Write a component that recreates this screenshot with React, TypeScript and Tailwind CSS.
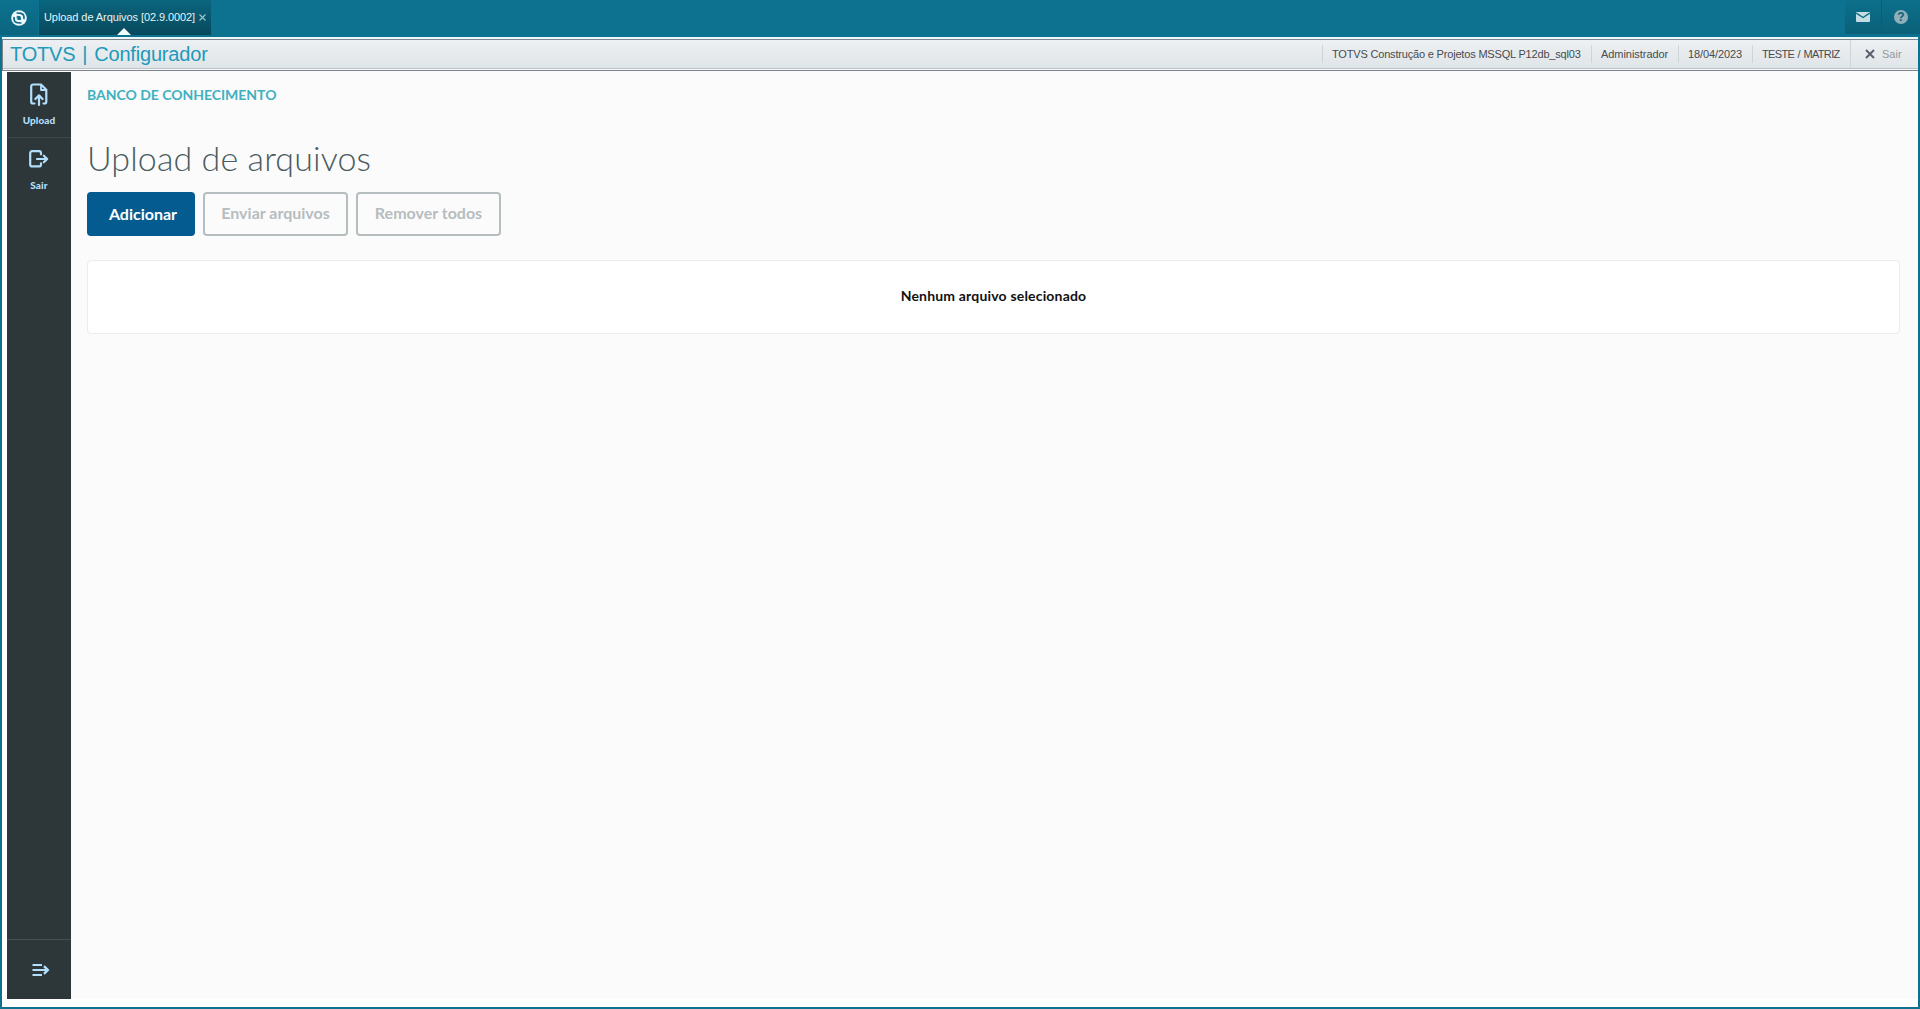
import type { ReactNode } from "react";

function UploadIcon() {
  return (
    <svg width="18" height="24" viewBox="0 0 18 24" fill="none" stroke="#b3dffc" strokeWidth="2.2" strokeLinecap="round" strokeLinejoin="round">
      <path d="M4.5 20.5H3a1.8 1.8 0 0 1-1.8-1.8V3.3A1.8 1.8 0 0 1 3 1.5h8l5.3 5.2v12a1.8 1.8 0 0 1-1.8 1.8h-1" />
      <path d="M11 1.8v5.2h5.2" strokeWidth="1.8" />
      <path d="M9 22V13M5.4 16 9 12.4l3.6 3.6" />
    </svg>
  );
}

function ExitIcon() {
  return (
    <svg className="-mt-[2px]" width="20" height="18" viewBox="0 0 20 18" fill="none" stroke="#b3dffc" strokeWidth="2.2" strokeLinecap="round" strokeLinejoin="round">
      <path d="M12 4.3V3.2A2 2 0 0 0 10 1.2H3.2a2 2 0 0 0-2 2v11.200a2 2 0 0 0 2 2H10a2 2 0 0 0 2-2v-1" />
      <path d="M8 9H18M14.8 5.7 18.2 9l-3.4 3.3" />
    </svg>
  );
}

function ExpandIcon() {
  return (
    <svg width="18" height="14" viewBox="0 0 18 14" fill="none" stroke="#b3dffc" strokeWidth="2">
      <path d="M0.5 2H10M0.5 7H16M0.5 12H10" />
      <path d="M12 3.2 15.8 7l-3.8 3.8" strokeWidth="2.4" />
    </svg>
  );
}

function Logo() {
  return (
    <svg width="16" height="16" viewBox="0 0 16 16" fill="none" stroke="#0b6a86" strokeLinecap="round">
      <circle cx="8" cy="8" r="7.8" fill="#eefafc" stroke="none" />
      <path d="M6.200 3 9.800 3.300Q12.600 3.800 12.900 6.500L13 8.500" strokeWidth="1.7" />
      <path d="M9.800 13 6.200 12.700Q3.400 12.200 3.100 9.500L3 7.500" strokeWidth="1.7" />
      <path d="M6.300 6.300 9.200 6.600 9.700 9.700 6.800 9.400z" fill="#0b6a86" strokeWidth="0.800" strokeLinejoin="round" />
    </svg>
  );
}

function HeaderItem({ width, children }: { width: string; children: ReactNode }) {
  return <div className={`flex h-[18px] items-center border-l border-[#cfd4d6] pl-[9px] ${width}`}>{children}</div>;
}

function MenuItem({ icon, label }: { icon: ReactNode; label: string }) {
  return (
    <div className="flex h-[65px] flex-col items-center">
      <div className="flex h-[39px] items-center pt-[7px]">{icon}</div>
      <span className="mt-[2px] text-[10px] leading-[14px] font-black tracking-[0.1px] text-[#b3dffc]">{label}</span>
    </div>
  );
}

export default function App() {
  return (
    <div className="flex h-[1009px] w-[1920px] flex-col overflow-hidden bg-[#0c728f] font-['Lato',sans-serif] whitespace-nowrap">
      <div className="flex h-[37px] shrink-0 items-start">
        <div className="flex h-[35px] w-[38px] items-center justify-center bg-linear-to-b from-[#0c728f] to-[#0b6580]">
          <Logo />
        </div>
        <div className="relative ml-px flex h-[35px] w-[172px] items-center bg-linear-to-b from-[#0a667f] to-[#07495d] pl-[5px] font-['Liberation_Sans',sans-serif] text-[11px] tracking-[-0.08px] text-[#e6f4f7]">
          <span>Upload de Arquivos [02.9.0002]</span>
          <svg className="mb-px ml-[4px]" width="7" height="7" viewBox="0 0 7 7" stroke="#9cc3ce" strokeWidth="1.2">
            <path d="M.5.5l6 6M6.5.5l-6 6" />
          </svg>
          <svg className="absolute bottom-0 left-[78px]" width="14" height="7" viewBox="0 0 14 7" fill="#f1fbfc">
            <path d="M0 7 7 0l7 7z" />
          </svg>
        </div>
        <div className="ml-auto flex h-[34px]">
          <div className="flex w-[37px] items-center justify-center border-r border-[#0c5c74] bg-linear-to-b from-[#0c708c] to-[#0a6078]">
            <svg className="-ml-px" width="14" height="10" viewBox="0 0 14 10">
              <rect width="14" height="10" rx="1" fill="#c4dde3" />
              <path d="M.3 1 7 5.5 13.7 1" fill="none" stroke="#0b6981" strokeWidth="1.4" />
            </svg>
          </div>
          <div className="flex w-[38px] items-center justify-center bg-linear-to-b from-[#0c708c] to-[#0a6078]">
            <div className="flex size-[14px] items-center justify-center rounded-full bg-[#8fb0ba] font-['Liberation_Sans',sans-serif] text-[12px] leading-none font-bold text-[#0b6078]">
              ?
            </div>
          </div>
        </div>
      </div>

      <div className="mr-[2px] mb-[2px] ml-[2px] flex min-h-0 flex-1 flex-col bg-white">
        <div className="h-[2px] shrink-0 bg-[#e9f8fb]" />
        <header className="flex h-[32px] shrink-0 flex-col border-y border-l border-[#7f848b] font-['Liberation_Sans',sans-serif]">
          <div className="flex h-[29px] shrink-0 items-center border-b border-[#bcc3c9] bg-linear-to-b from-[#eef0f2] to-[#e0e5e9] text-[11px] text-[#474b4e]">
            <h1 className="pl-[7px] text-[20px] leading-[29px] tracking-[-0.18px] text-[#219abb] [word-spacing:1.5px]">TOTVS | Configurador</h1>
            <div className="ml-auto flex h-full items-center">
              <HeaderItem width="w-[269px]"><span className="tracking-[-0.18px]">TOTVS Construção e Projetos MSSQL P12db_sql03</span></HeaderItem>
              <HeaderItem width="w-[87px]"><span className="tracking-[-0.05px]">Administrador</span></HeaderItem>
              <HeaderItem width="w-[74px]"><span className="tracking-[-0.1px]">18/04/2023</span></HeaderItem>
              <HeaderItem width="w-[98px]"><span className="tracking-[-0.65px] [word-spacing:1px]">TESTE / MATRIZ</span></HeaderItem>
              <div className="flex h-full w-[68px] items-center border-l border-[#cfd4d6] pl-[14px] text-[#94989d]">
                <svg width="10" height="10" viewBox="0 0 10 10" stroke="#5b6070" strokeWidth="2">
                  <path d="M1 1l8 8M9 1l-8 8" />
                </svg>
                <span className="ml-[7px]">Sair</span>
              </div>
            </div>
          </div>
          <div className="h-px bg-[#f6f8f9]" />
        </header>

        <div className="mb-[8px] flex min-h-0 flex-1 pl-[5px]">
          <nav className="mt-px flex w-[64px] flex-col bg-[#2d3739]">
            <MenuItem icon={<UploadIcon />} label="Upload" />
            <div className="-mb-px h-px bg-[#3d4749]" />
            <MenuItem icon={<ExitIcon />} label="Sair" />
            <div className="mt-auto flex h-[60px] items-center justify-center border-t border-[#465052] pl-[3px]">
              <ExpandIcon />
            </div>
          </nav>
          <main className="flex min-w-0 flex-1 flex-col bg-[#fbfbfb] pr-[18px] pl-[16px]">
            <div className="mt-[14px] text-[14px] leading-[20px] font-bold tracking-[-0.03px] text-[#40b0c0]">BANCO DE CONHECIMENTO</div>
            <h2 className="mt-[32px] h-[43px] text-[34px] leading-[42px] font-light tracking-[0.1px] text-[#4a5c60]">Upload de arquivos</h2>
            <div className="mt-[12px] flex gap-[8px] text-[16px] font-bold">
              <button className="h-[44px] w-[108px] rounded-[4px] bg-[#045b8f] pl-[4px] text-white">Adicionar</button>
              <button className="h-[44px] w-[145px] rounded-[4px] border-2 border-[#b6bdbf] pb-[2px] text-[#b6bdbf]">Enviar arquivos</button>
              <button className="h-[44px] w-[145px] rounded-[4px] border-2 border-[#b6bdbf] pb-[2px] text-[#b6bdbf]">Remover todos</button>
            </div>
            <div className="mt-[24px] flex h-[74px] items-center justify-center rounded-[4px] border border-[#ebebeb] bg-white pb-[3px] text-[14px] font-bold tracking-[0.18px] text-[#111]">
              Nenhum arquivo selecionado
            </div>
          </main>
        </div>
      </div>
    </div>
  );
}
